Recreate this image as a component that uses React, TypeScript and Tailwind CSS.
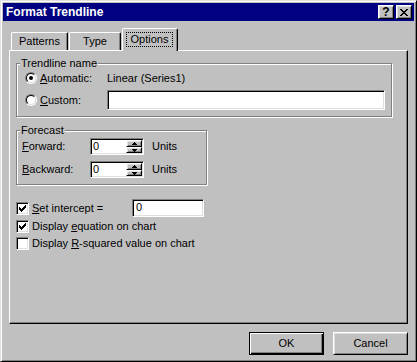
import type { ReactNode } from "react";

const raised =
  "border border-t-white border-l-white border-r-black border-b-black shadow-[inset_1px_1px_#dfdfdf,inset_-1px_-1px_#808080]";
const sunken =
  "border border-t-[#808080] border-l-[#808080] border-r-white border-b-white shadow-[inset_1px_1px_#000,inset_-1px_-1px_#dfdfdf]";
const etched = "border border-[#808080] shadow-[1px_1px_0_#fff,inset_1px_1px_0_#fff]";

function Radio({ checked }: { checked?: boolean }) {
  return (
    <div className="w-[12px] h-[12px] rounded-full border border-t-[#808080] border-l-[#808080] border-r-white border-b-white">
      <div className="w-full h-full rounded-full border border-t-black border-l-black border-r-[#dfdfdf] border-b-[#dfdfdf] bg-white flex items-center justify-center">
        {checked && <div className="w-[4px] h-[4px] rounded-full bg-black" />}
      </div>
    </div>
  );
}

function Check({ checked }: { checked?: boolean }) {
  return (
    <div className={`${sunken} w-[13px] h-[13px] bg-white flex items-center justify-center shrink-0`}>
      {checked && (
        <svg width="7" height="7" viewBox="0 0 7 7" shapeRendering="crispEdges">
          <path d="M6 0h1v1H6z M5 1h2v1H5z M0 2h1v1H0z M4 2h3v1H4z M0 3h2v1H0z M3 3h3v1H3z M0 4h5v1H0z M1 5h3v1H1z M2 6h1v1H2z" fill="#000" />
        </svg>
      )}
    </div>
  );
}

function Arrow({ up }: { up?: boolean }) {
  return (
    <svg width="5" height="3" viewBox="0 0 5 3" shapeRendering="crispEdges">
      <path d={up ? "M2 0h1v1H2z M1 1h3v1H1z M0 2h5v1H0z" : "M0 0h5v1H0z M1 1h3v1H1z M2 2h1v1H2z"} fill="#000" />
    </svg>
  );
}

function Spin({ value }: { value: string }) {
  return (
    <div className={`${sunken} w-[54px] h-[17px] bg-white flex p-[1px]`}>
      <div className="flex-1 pl-[1px] leading-[13px]">{value}</div>
      <div className="w-[16px] flex flex-col">
        <div className={`${raised} bg-[#c0c0c0] h-[7px] flex items-center justify-center`}>
          <Arrow up />
        </div>
        <div className={`${raised} bg-[#c0c0c0] h-[6px] flex items-center justify-center`}>
          <Arrow />
        </div>
      </div>
    </div>
  );
}

function Group({ title, className, inner, children }: { title: string; className: string; inner: string; children: ReactNode }) {
  return (
    <fieldset className={`${etched} ${className}`}>
      <legend className="ml-[3px] px-[1px] leading-[13px] bg-[#c0c0c0]">{title}</legend>
      <div className={inner}>{children}</div>
    </fieldset>
  );
}

function Tab({ label, selected }: { label: string; selected?: boolean }) {
  if (selected) {
    return (
      <div className="relative z-10 -mb-[1px] w-[56px] h-[23px] bg-[#c0c0c0] border-l border-t border-r border-l-white border-t-white border-r-black shadow-[inset_-1px_0_#808080] rounded-t-[2px] flex justify-center pt-[3px] pr-[1px]">
        <div className="h-[15px] px-[4px] border border-dotted border-black leading-[13px]">{label}</div>
      </div>
    );
  }
  return (
    <div className="h-[18px] border-l border-t border-r border-l-white border-t-white border-r-black shadow-[inset_-1px_0_#808080] rounded-t-[2px] flex justify-center pt-[2px] leading-[13px]">
      {label}
    </div>
  );
}

export default function App() {
  return (
    <div className="w-[417px] h-[362px] bg-[#c0c0c0] border border-t-[#dfdfdf] border-l-[#dfdfdf] border-r-black border-b-black shadow-[inset_1px_1px_#fff,inset_-1px_-1px_#808080] p-[2px] font-['Liberation_Sans',Arial,sans-serif] text-[11px] text-black">
      <div className="h-[18px] bg-[#000080] flex items-center justify-between pl-[3px] pr-[2px]">
        <span className="text-white font-bold text-[12px] leading-[13px]">Format Trendline</span>
        <div className="flex gap-[2px]">
          <div className={`${raised} bg-[#c0c0c0] w-[16px] h-[14px] flex items-center justify-center font-bold text-[12px] leading-[12px]`}>
            ?
          </div>
          <div className={`${raised} bg-[#c0c0c0] w-[16px] h-[14px] flex items-center justify-center`}>
            <svg width="8" height="7" viewBox="0 0 8 7" shapeRendering="crispEdges">
              <path
                d="M0 0h2v1H0z M6 0h2v1H6z M1 1h2v1H1z M5 1h2v1H5z M2 2h4v1H2z M3 3h2v1H3z M2 4h4v1H2z M1 5h2v1H1z M5 5h2v1H5z M0 6h2v1H0z M6 6h2v1H6z"
                fill="#000"
              />
            </svg>
          </div>
        </div>
      </div>

      <div className="ml-[6px] mt-[7px] w-[399px]">
        <div className="flex items-end h-[22px] pl-[2px]">
          <div className="w-[57px]">
            <Tab label="Patterns" />
          </div>
          <div className="w-[52px] ml-[1px]">
            <Tab label="Type" />
          </div>
          <div className="ml-[1px]">
            <Tab label="Options" selected />
          </div>
        </div>

        <div className="h-[274px] border border-t-white border-l-white border-r-black border-b-black shadow-[inset_-1px_-1px_#808080] pl-[6px]">
          <Group title="Trendline name" className="mt-[6px] w-[376px]" inner="pl-[8px] pb-[6px]">
            <div className="flex items-center h-[16px]">
              <Radio checked />
              <span className="ml-[3px] w-[67px]">
                <u>A</u>utomatic:
              </span>
              <span>Linear (Series1)</span>
            </div>
            <div className="flex items-center h-[20px] mt-[4px]">
              <Radio />
              <span className="ml-[3px] w-[67px]">
                <u>C</u>ustom:
              </span>
              <div className={`${sunken} bg-white w-[278px] h-[20px]`} />
            </div>
          </Group>

          <Group title="Forecast" className="mt-[7px] w-[191px]" inner="pl-[5px] pb-[6px]">
            <div className="flex items-center h-[17px] mt-[1px]">
              <span className="w-[68px]">
                <u>F</u>orward:
              </span>
              <Spin value="0" />
              <span className="ml-[8px]">Units</span>
            </div>
            <div className="flex items-center h-[17px] mt-[6px]">
              <span className="w-[68px]">
                <u>B</u>ackward:
              </span>
              <Spin value="0" />
              <span className="ml-[8px]">Units</span>
            </div>
          </Group>

          <div className="mt-[14px]">
            <div className="flex items-center h-[18px]">
              <Check checked />
              <span className="ml-[3px] w-[100px]">
                <u>S</u>et intercept =
              </span>
              <div className={`${sunken} bg-white w-[72px] h-[18px] pl-[3px] leading-[14px]`}>0</div>
            </div>
            <div className="flex items-center h-[18px]">
              <Check checked />
              <span className="ml-[3px]">
                Display <u>e</u>quation on chart
              </span>
            </div>
            <div className="flex items-center h-[17px]">
              <Check />
              <span className="ml-[3px]">
                Display <u>R</u>-squared value on chart
              </span>
            </div>
          </div>
        </div>

        <div className="flex justify-end gap-[9px] mt-[8px]">
          <button className="w-[75px] h-[23px] bg-[#c0c0c0] border border-black shadow-[inset_1px_1px_#fff,inset_-1px_-1px_#000,inset_-2px_-2px_#808080] leading-[13px]">
            OK
          </button>
          <button className={`${raised} w-[75px] h-[23px] bg-[#c0c0c0] leading-[13px]`}>Cancel</button>
        </div>
      </div>
    </div>
  );
}
